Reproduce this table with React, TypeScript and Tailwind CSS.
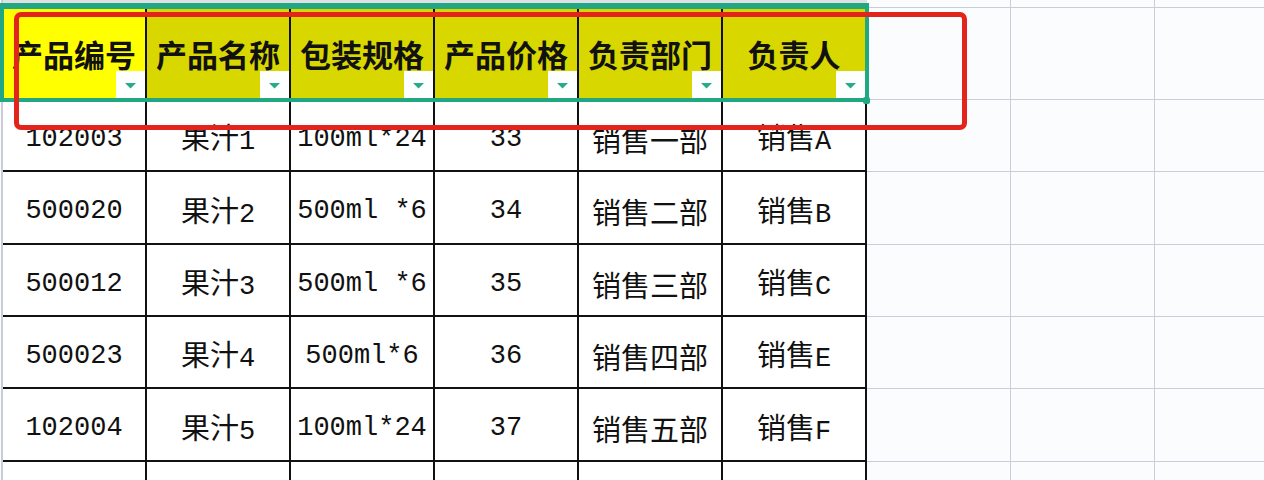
const HEADERS = ["产品编号", "产品名称", "包装规格", "产品价格", "负责部门", "负责人"];

const ROWS = [
  ["102003", "果汁1", "100ml*24", "33", "销售一部", "销售A"],
  ["500020", "果汁2", "500ml *6", "34", "销售二部", "销售B"],
  ["500012", "果汁3", "500ml *6", "35", "销售三部", "销售C"],
  ["500023", "果汁4", "500ml*6", "36", "销售四部", "销售E"],
  ["102004", "果汁5", "100ml*24", "37", "销售五部", "销售F"],
  ["", "", "", "", "", ""],
];

// row heights so the black lines land at 172 / 245 / 317 / 389 / 462
const ROW_H = ["h-[72px]", "h-[73px]", "h-[72px]", "h-[72px]", "h-[73px]", "h-[40px]"];

const cjk = { fontFamily: '"Noto Sans CJK SC", sans-serif' };
const mono = { fontFamily: '"Liberation Mono", "Noto Sans CJK SC", monospace' };

// ascii runs in the mono face, the rest in the CJK face
const CellText = ({ text }: { text: string }) => {
  const parts = text.split(/([\x00-\x7f]+)/).filter(Boolean);
  return (
    <span className="whitespace-pre leading-none">
      {parts.map((p, i) =>
        /^[\x00-\x7f]+$/.test(p) ? (
          <span key={i} className="text-[27px]" style={mono}>
            {p}
          </span>
        ) : (
          <span key={i} className="text-[29px]" style={cjk}>
            {p}
          </span>
        )
      )}
    </span>
  );
};

const GridCells = ({ last }: { last?: boolean }) => (
  <>
    {[0, 1, 2].map((i) => (
      <div
        key={i}
        className={`w-[144px] shrink-0 border-r border-b border-[#c9cdd8] ${last ? "border-b-0" : ""}`}
      />
    ))}
  </>
);

const FilterButton = () => (
  <div className="absolute right-0 bottom-[2px] flex h-[27px] w-[29px] items-center justify-center bg-[#fdfefe]">
    <svg width="11" height="6" viewBox="0 0 11 6" className="mt-[2px]">
      <polygon points="0,0 11,0 5.5,5.5" fill="#27a98a" />
    </svg>
  </div>
);

export default function App() {
  return (
    <div className="relative h-[480px] w-[1264px] overflow-hidden bg-[#fbfcfe] text-[#111]">
      <div className="ml-px border-l-2 border-[#c9cdd8]">
        {/* strip of the row above */}
        <div className="flex h-[8px]">
          <div className="w-[864px] shrink-0 bg-[#dfe0e4]" />
          <GridCells />
        </div>

        {/* header row */}
        <div className="flex h-[92px]">
          {HEADERS.map((h, i) => (
            <div
              key={h}
              className={`relative flex w-[144px] shrink-0 items-center justify-center border-r-2 border-[#111] pb-[2px] ${
                i === 0 ? "bg-[#ffff00]" : "bg-[#d8d800]"
              }`}
            >
              <span className="text-[31px] font-bold leading-none" style={cjk}>
                {h}
              </span>
              <FilterButton />
            </div>
          ))}
          <GridCells />
        </div>

        {/* data rows */}
        {ROWS.map((row, r) => (
          <div key={r} className={`flex ${ROW_H[r]}`}>
            {row.map((v, c) => (
              <div
                key={c}
                className={`flex w-[144px] shrink-0 items-center justify-center border-r-2 border-[#111] bg-white pt-[8px] ${
                  r < ROWS.length - 1 ? "border-b-2" : ""
                }`}
              >
                <CellText text={v} />
              </div>
            ))}
            <GridCells last={r === ROWS.length - 1} />
          </div>
        ))}
      </div>

      {/* selection frame on the header range */}
      <div className="absolute left-0 top-[3px] h-[99px] w-[869px] border-x-4 border-t-[6px] border-b-4 border-[#21a883]" />
      <div className="absolute left-[863px] top-[97px] h-[7px] w-[7px] rounded-[2px] bg-[#21a883]" />

      {/* red highlight box */}
      <div className="absolute left-[14px] top-[12px] h-[118px] w-[953px] rounded-[7px] border-[5px] border-[#e3241c]" />
    </div>
  );
}
